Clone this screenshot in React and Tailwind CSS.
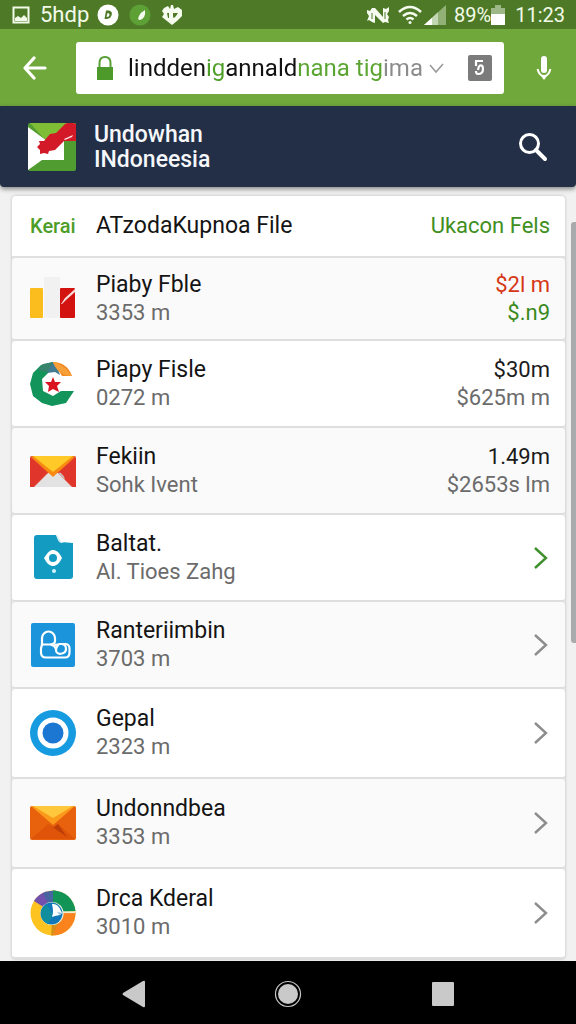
import React from "react";

const BarsIcon = () => (
  <svg viewBox="0 0 46 46" className="h-[46px] w-[46px]" aria-hidden="true">
    <rect x="0" y="12" width="13" height="30" rx="1" fill="#fbbc1e" />
    <path d="M14 1h16v41H14z" fill="#f1f1f1" />
    <rect x="30" y="12" width="15" height="30" rx="1" fill="#d31310" />
    <path d="M31 28l4-6 10-9v3l-9 8-4 4z" fill="#f8dedc" />
  </svg>
);

const StarRingIcon = () => (
  <svg viewBox="0 0 46 46" className="h-[46px] w-[46px]" aria-hidden="true">
    <path d="M23 1L11 4 3 12 0 23l3 12 9 7 10 3 14-3 8-12H31l-8 5-10-5-1-12 7-7 6-2z" fill="#12945a" />
    <path d="M23 1L13 3l-5 6 8 2 8-1z" fill="#38836c" />
    <path d="M23 1l-6 11 8-1 5 3-3-8z" fill="#427a92" />
    <path d="M23 1c9 0 16 5 19 14H32c-2-4-6-7-9-14z" fill="#f28b24" />
    <path d="M23 1c8 2 14 7 19 14-8 0-16-5-19-14z" fill="#f6a039" />
    <path d="M23 16l2 5 6 0-4 4 2 6-6-3-5 3 1-6-4-4 6 0z" fill="#d9131f" />
  </svg>
);

const RedMailIcon = () => (
  <svg viewBox="0 0 46 46" className="h-[46px] w-[46px]" aria-hidden="true">
    <path d="M2 8h42q2 0 2 2v27q0 2-2 2H2q-2 0-2-2V10q0-2 2-2z" fill="#e13a2d" />
    <path d="M4 39l14-14h10l14 14z" fill="#e3e2e2" />
    <path d="M28 25l5-1 2 8z" fill="#c9b9b7" />
    <path d="M1 9l22 20L45 9l-2-1H3z" fill="#f88a12" />
    <path d="M3 8l20 16L43 8z" fill="#ffc928" />
    <path d="M0 11l16 13L2 39H0zM46 11L30 24l14 15h2z" fill="#e0352b" />
  </svg>
);

const FileIcon = () => (
  <svg viewBox="0 0 46 46" className="h-[46px] w-[46px]" aria-hidden="true">
    <path d="M7 0h19l5 7 12 1v33q0 3-3 3H7q-3 0-3-3V3q0-3 3-3z" fill="#139bc2" />
    <path d="M26 0h1l4 6q1 2 5 2h-5q-3-1-5-8z" fill="#d8eef5" />
    <path d="M14 23c4-6 6-8 9-8s6 2 9 8c-3 6-6 8-9 8s-6-2-9-8z" fill="#fff" />
    <circle cx="23" cy="23" r="4" fill="#139bc2" />
    <circle cx="24" cy="36" r="2" fill="#d6f4fc" />
  </svg>
);

const BlobIcon = () => (
  <svg viewBox="0 0 46 46" className="h-[46px] w-[46px]" aria-hidden="true">
    <rect x="1" y="1" width="44" height="44" rx="2" fill="#1b94dc" />
    <g fill="none" stroke="#fff" strokeWidth="2.2" strokeLinejoin="round" strokeLinecap="round">
      <path d="M12 22.500V16a6.500 6.500 0 0 1 13 0v3q0 3-4 3.500z" />
      <path d="M12 22.500q-1.500 4-1 8 0 5 5 5h19q4.500 0 4.500-5v-4q0-4.500-4.500-4.500h-5l-5 1" />
      <path d="M28 23q-3 4-1.500 7 1.500 2.500 5.500 1.500 4-1 4-4.500 0-4-3-4.500" />
      <path d="M21 22.500q4 1.500 5 4.500" />
    </g>
  </svg>
);

const RingIcon = () => (
  <svg viewBox="0 0 46 46" className="h-[46px] w-[46px]" aria-hidden="true">
    <circle cx="23" cy="23" r="23" fill="#169be0" />
    <circle cx="23" cy="23" r="15.500" fill="#fff" />
    <circle cx="23" cy="23" r="10.5" fill="#1c77d2" />
  </svg>
);

const OrangeMailIcon = () => (
  <svg viewBox="0 0 46 46" className="h-[46px] w-[46px]" aria-hidden="true">
    <rect y="6" width="46" height="34" rx="2" fill="#e8610d" />
    <path d="M1 39l17-15 5 4 5-4 17 15z" fill="#df5409" />
    <path d="M18 24l5 4 5-4 9 13-13-9z" fill="#bf3e08" />
    <path d="M1 6l22 19L45 6z" fill="#fb9a1a" />
    <path d="M3 6l20 12L43 6z" fill="#ffc83c" />
  </svg>
);

const WheelIcon = () => (
  <svg viewBox="0 0 46 46" className="h-[46px] w-[46px]" aria-hidden="true">
    <circle cx="23" cy="23" r="22.500" fill="#fcc321" />
    <path d="M23 23L4 11A22.500 22.500 0 0 1 17 1.300z" fill="#7250ad" />
    <path d="M23 23L13 3.500A22.500 22.500 0 0 1 26 .7z" fill="#48659f" />
    <path d="M23 23L23 .5A22.500 22.500 0 0 1 45.500 21z" fill="#129456" />
    <path d="M45.500 22A22.500 22.500 0 0 1 23 45.500l3-12-3-11.500z" fill="#fb831d" />
    <path d="M23 45.500l5-12-6 0-1 12z" fill="#d99018" />
    <path d="M31 21.300h14.500v1.800H31z" fill="#f2ecd0" />
    <circle cx="22" cy="23.500" r="11.600" fill="#e8f1dc" />
    <circle cx="21.500" cy="23.500" r="10.900" fill="#1278b9" />
    <path d="M11 21q-1 9 7 13l5-9-6-10q-5 2-6 6z" fill="#118e9e" />
    <path d="M22 14q6-1 9 7l1 2-2 2-5 1-3 1q2-5 0-13z" fill="#fff" />
    <path d="M27 22l5 1-2 2z" fill="#8bbad8" />
  </svg>
);

const Chevron = ({ className }) => (
  <svg viewBox="0 0 18 24" className={`h-6 w-[18px] ${className}`} fill="none" stroke="currentColor" strokeWidth="2.4" aria-hidden="true">
    <path d="M3 2l11 10L3 22" />
  </svg>
);

const rows = [
  { icon: BarsIcon, title: "Piaby Fble", sub: "3353 m", top: "$2l m", bottom: "$.n9", topCls: "text-[#d63815]", bottomCls: "text-[#3a8a1d]", h: "h-[83px]" },
  { icon: StarRingIcon, title: "Piapy Fisle", sub: "0272 m", top: "$30m", bottom: "$625m m", topCls: "text-[#1b1b1b]", bottomCls: "text-[#6b6b6b]", h: "h-[87px]" },
  { icon: RedMailIcon, title: "Fekiin", sub: "Sohk Ivent", top: "1.49m", bottom: "$2653s lm", topCls: "text-[#1b1b1b]", bottomCls: "text-[#6b6b6b]", h: "h-[87px]" },
  { icon: FileIcon, title: "Baltat.", sub: "Al. Tioes Zahg", chevron: "text-[#3f8f2c]", h: "h-[87px]" },
  { icon: BlobIcon, title: "Ranteriimbin", sub: "3703 m", chevron: "text-[#8d8d8d]", h: "h-[87px]" },
  { icon: RingIcon, title: "Gepal", sub: "2323 m", chevron: "text-[#8d8d8d]", h: "h-[90px]" },
  { icon: OrangeMailIcon, title: "Undonndbea", sub: "3353 m", chevron: "text-[#8d8d8d]", h: "h-[90px]" },
  { icon: WheelIcon, title: "Drca Kderal", sub: "3010 m", chevron: "text-[#8d8d8d]", h: "h-[90px]" },
];

function StatusBar() {
  return (
    <div className="flex h-[29px] items-center justify-between bg-[#4e7a28] pr-[11px] pl-3 text-[22px] leading-7 text-[#f3fae9]">
      <div className="flex items-center">
        <svg viewBox="0 0 18 18" className="h-[18px] w-[18px]" aria-hidden="true">
          <path d="M1.5 1.5h15v15h-15z" fill="none" stroke="#f3fae9" strokeWidth="2" />
          <path d="M3 15v-3l3-2 3 2 3-3 3 3v3z" fill="#f3fae9" />
        </svg>
        <span className="ml-[10px]">5hdp</span>
        <svg viewBox="0 0 22 22" className="ml-2 h-[22px] w-[22px]" aria-hidden="true">
          <circle cx="11" cy="11" r="10.5" fill="#fff" />
          <path d="M9 6.5h3q4 1 2.500 5-1 3-4.500 3.500H7.500zM10.500 9l-1 4q3 0 3-2.500 0-1.500-2-1.500z" fill="#4e7a28" fillRule="evenodd" />
        </svg>
        <svg viewBox="0 0 22 22" className="ml-[10px] h-[22px] w-[22px]" aria-hidden="true">
          <circle cx="11" cy="11" r="10.500" fill="#5da036" />
          <path d="M16 6q1 8-5 10-3 0-1-4 2-4 6-6z" fill="#f5fbef" />
        </svg>
        <svg viewBox="0 0 22 22" className="ml-[10px] h-[22px] w-[22px]" aria-hidden="true">
          <path d="M10 1l2 0 1 4 4-2 4 3v6l-5 5-5 4-5-4-5-4 2-3-2-3 2-3 4-2 2 3z" fill="#f5fbef" />
          <path d="M6 9h2v5H7zM12 9h5l-2 3-2 2-1-1z" fill="#4e7a28" />
        </svg>
      </div>
      <div className="flex items-center">
        <svg viewBox="0 0 24 20" className="h-5 w-6" aria-hidden="true">
          <path d="M1 5l3 1 2-3h3l8 9V3l3 1 3-2v4l-2 3 2 3-1 3 1 3-4-1-2 1-8-8v8l-3-1-3-2-2 1 2-5-2-3z" fill="#f5fbef" />
          <path d="M6 8v6M19 7v7" stroke="#4e7a28" strokeWidth="1" />
        </svg>
        <svg viewBox="0 0 24 20" className="ml-2 h-5 w-6" fill="none" stroke="#f5fbef" strokeWidth="2.600" aria-hidden="true">
          <path d="M1 7Q12-3 23 7M5 11q7-6 14 0M8.500 14.500q3.500-3 7 0" />
          <circle cx="12" cy="17.500" r="1.500" fill="#f5fbef" stroke="none" />
        </svg>
        <svg viewBox="0 0 22 20" className="ml-[2px] h-5 w-[22px]" aria-hidden="true">
          <path d="M22 0v20H0z" fill="#92b177" />
          <path d="M8 12.700V20H0z" fill="#fff" />
          <path d="M14 7.300V20H8v-7.300z" fill="#c4d7b4" />
        </svg>
        <span className="ml-2 text-[20px]">89%</span>
        <svg viewBox="0 0 14 20" className="h-5 w-[14px]" aria-hidden="true">
          <path d="M4 0h6v3h4v7H0V3h4z" fill="#9db886" />
          <path d="M0 9h14v11H0z" fill="#fff" />
        </svg>
        <span className="ml-[10px] text-[20px]">11:23</span>
      </div>
    </div>
  );
}

function AddressBar() {
  return (
    <div className="flex h-[77px] items-center bg-[#71a83c] pr-6 pl-[22px]">
      <button type="button" aria-label="Back" className="shrink-0">
        <svg viewBox="0 0 26 24" className="h-6 w-[26px]" fill="none" stroke="#fff" strokeWidth="3.200" strokeLinecap="round" strokeLinejoin="round" aria-hidden="true">
          <path d="M12 2L3 12l9 10M4 12h19" />
        </svg>
      </button>
      <div className="ml-7 flex h-[52px] min-w-0 flex-1 items-center rounded-[3px] bg-white pr-3 pl-5">
        <svg viewBox="0 0 18 26" className="h-[26px] w-[18px] shrink-0" aria-hidden="true">
          <path d="M3.500 13V8q0-6 5.500-6t5.500 6v5" fill="none" stroke="#58a036" strokeWidth="2" />
          <rect x="1" y="12" width="16" height="13" fill="#4d9a2a" />
        </svg>
        <input
          type="text"
          aria-label="Address"
          defaultValue="linddenigannaldnana tigima"
          className="ml-[14px] h-10 min-w-0 flex-1 bg-[linear-gradient(90deg,#111_0_78px,#4f9e2a_78px_98px,#111_98px_169px,#5aa52f_169px_255px,#8b8b8b_255px)] bg-clip-text text-[24px] text-transparent outline-none"
        />
        <button type="button" aria-label="Expand" className="-ml-8 shrink-0">
          <svg viewBox="0 0 18 16" className="h-4 w-[18px]" fill="none" stroke="#9a9a9a" strokeWidth="1.600" aria-hidden="true">
            <path d="M4 5l6 7 7-8" />
          </svg>
        </button>
        <button type="button" aria-label="Tabs" className="ml-6 shrink-0">
          <svg viewBox="0 0 24 26" className="h-[26px] w-6" aria-hidden="true">
            <rect width="24" height="26" rx="2" fill="#7b7b7b" />
            <path d="M7 6h8M8 6v5M11 11q4-2 4 3t-5 5q-2 0-2-3M11 11l-1 4" fill="none" stroke="#fff" strokeWidth="2.200" />
          </svg>
        </button>
      </div>
      <button type="button" aria-label="Voice search" className="ml-8 shrink-0">
        <svg viewBox="0 0 16 26" className="h-[26px] w-4" aria-hidden="true">
          <rect x="5" y="1" width="6" height="17" rx="3" fill="#fff" />
          <path d="M1.500 14q2 7 6.500 7t6.500-7" fill="none" stroke="#fff" strokeWidth="2" />
          <path d="M5 21h6l-3 4z" fill="#fff" />
        </svg>
      </button>
    </div>
  );
}

function SiteHeader() {
  return (
    <header className="flex h-[81px] items-center rounded-b-[4px] bg-[#222f46] pr-7 pl-7 shadow-[0_2px_5px_rgba(0,0,0,0.45)]">
      <svg viewBox="0 0 48 48" className="h-12 w-12 shrink-0" aria-hidden="true">
        <rect width="48" height="48" rx="2" fill="#519c31" />
        <path d="M2 0h44q2 0 2 2v16H18z" fill="#7fbd36" />
        <path d="M0 4l19 14h17v19H14L0 47z" fill="#fff" />
        <path d="M48 1v17H36l-9 9-6 1-1 3-4-1-4 1 0-4-3-3 3-3-1-3h5l6-7 6-1 9-9 5-2z" fill="#d31927" />
        <path d="M36 16l9-4-1 2-7 3z" fill="#ffe5e5" />
      </svg>
      <h1 className="ml-[18px] flex-1 text-[23px] leading-[25px] font-medium text-[#f5f7fa]">
        Undowhan
        <br />
        INdoneesia
      </h1>
      <button type="button" aria-label="Search" className="shrink-0">
        <svg viewBox="0 0 30 30" className="h-[30px] w-[30px]" fill="none" stroke="#fff" aria-hidden="true">
          <circle cx="11.500" cy="11.500" r="9" strokeWidth="3" />
          <path d="M18 18l9 9" strokeWidth="4" strokeLinecap="round" />
        </svg>
      </button>
    </header>
  );
}

function Row({ row, shaded }) {
  const Icon = row.icon;
  return (
    <li>
      <a href="#" className={`flex items-center rounded-[4px] border-b-2 border-[#dedede] pr-[15px] pl-[18px] ${row.h} ${shaded ? "bg-[#fafafa]" : "bg-white"}`}>
        <span className="shrink-0"><Icon /></span>
        <span className="ml-5 flex min-w-0 flex-1 flex-col">
          <span className="text-[23px] leading-7 text-[#141414]">{row.title}</span>
          <span className="text-[22px] leading-7 text-[#6b6b6b]">{row.sub}</span>
        </span>
        {row.chevron ? (
          <Chevron className={row.chevron} />
        ) : (
          <span className="flex flex-col items-end text-[22px] leading-7">
            <span className={row.topCls}>{row.top}</span>
            <span className={row.bottomCls}>{row.bottom}</span>
          </span>
        )}
      </a>
    </li>
  );
}

function NavBar() {
  return (
    <nav className="flex h-[63px] items-center justify-between bg-black px-[121px] pt-1 pb-px">
      <button type="button" aria-label="Back">
        <svg viewBox="0 0 24 28" className="h-7 w-6" aria-hidden="true">
          <path d="M22 1q2-1 2 1v24q0 2-2 1L2 15q-1-1 0-2z" fill="#c9c9c9" />
        </svg>
      </button>
      <button type="button" aria-label="Home">
        <svg viewBox="0 0 28 28" className="h-7 w-7" aria-hidden="true">
          <circle cx="14" cy="14" r="12.500" fill="none" stroke="#c9c9c9" strokeWidth="1.200" />
          <circle cx="14" cy="14" r="10" fill="#c9c9c9" />
        </svg>
      </button>
      <button type="button" aria-label="Recent apps">
        <svg viewBox="0 0 24 24" className="h-6 w-6" aria-hidden="true">
          <rect x="1" width="22" height="24" rx="1" fill="#c9c9c9" />
        </svg>
      </button>
    </nav>
  );
}

export default function App() {
  return (
    <div className="flex min-h-screen flex-col bg-[#f1f1f2] font-['Roboto',sans-serif]">
      <StatusBar />
      <AddressBar />
      <SiteHeader />
      <main className="relative flex-1 pt-[9px] pr-[11px] pl-3">
        <section className="rounded-[4px] bg-[#e6e6e6] shadow-[0_0_3px_rgba(0,0,0,0.25)]">
          <div className="flex h-[62px] items-center rounded-t-[4px] border-b-2 border-[#e0e0e0] bg-white pr-[15px] pl-[18px]">
            <span className="w-[46px] shrink-0 text-[20px] leading-7 font-medium text-[#4c9d27]">Kerai</span>
            <h2 className="ml-5 flex-1 text-[23px] leading-7 text-[#141414]">ATzodaKupnoa File</h2>
            <a href="#" className="text-[22px] leading-7 text-[#3f8f22]">Ukacon Fels</a>
          </div>
          <ul>
            {rows.map((row, i) => (
              <Row key={i} row={row} shaded={i % 2 === 0} />
            ))}
          </ul>
        </section>
        <div className="absolute top-[35px] right-0 h-[421px] w-[5px] rounded-l-[3px] bg-[#a9aaab]" />
      </main>
      <NavBar />
    </div>
  );
}
